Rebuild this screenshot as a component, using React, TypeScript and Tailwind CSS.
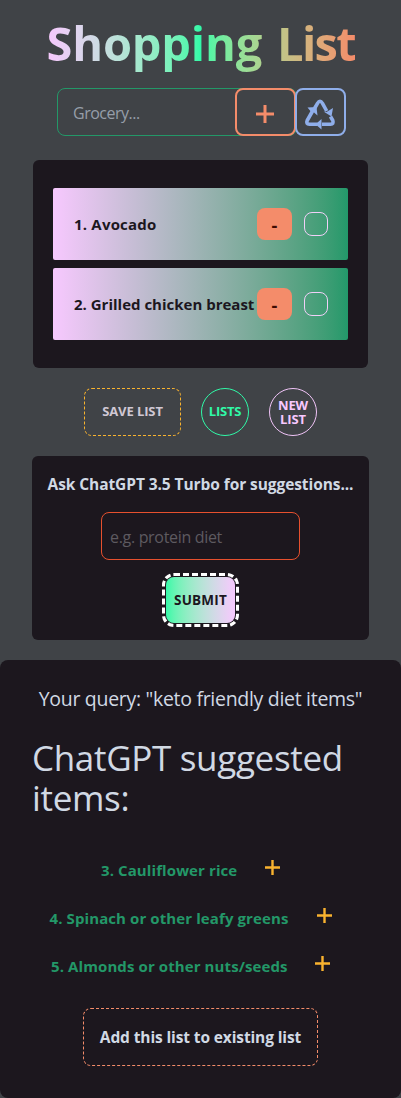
import React from "react";

const panel = "bg-[#1c171e]";

function ListRow({ label, spacing }: { label: string; spacing: string }) {
  return (
    <li className="flex h-[72px] w-[295px] items-center rounded-[2px] bg-linear-to-r from-[#f7c8fe] to-[#22996a] pr-5 pl-[21px]">
      <span className={"w-[183px] whitespace-nowrap text-[15px] font-bold text-[#1c171e] " + spacing}>{label}</span>
      <button className="h-8 w-[35px] rounded-lg bg-[#f48c6a] pt-px text-lg leading-8 font-bold text-[#3d0b02]">-</button>
      <span className="ml-3 size-6 rounded-lg border border-[#f0d0f8]" />
    </li>
  );
}

function Suggestion({ label, width }: { label: string; width: string }) {
  return (
    <li className="flex h-12 items-center justify-center">
      <span className={"whitespace-nowrap text-[15px] font-bold tracking-[0.1px] text-[#239868] " + width}>{label}</span>
      <svg viewBox="0 0 15 15" className="relative -top-[3px] ml-7 size-[15px]" stroke="#f9b32f" strokeWidth="2.4">
        <path d="M7.500 0v15M0 7.500h15" />
      </svg>
    </li>
  );
}

function RecycleIcon() {
  return (
    <svg viewBox="0 0 32 34" className="-ml-px h-[34px] w-8 shrink-0" fill="none" stroke="#8faeea" strokeWidth="3.6" strokeLinejoin="round">
      <path d="M10.500 12.500l3-5.200q2.500-4.200 5 0l4.200 7.700" />
      <path d="M26.500 20.500l2.300 4q1.200 3.500-2.300 3.700H18" />
      <path d="M13.500 28.200H5.500q-3.800-.2-2.300-3.700L8.300 15.500" />
      <path d="M3.500 11.500l9-.5 1 8.500-3.500-3-2 .5zM19.500 15.500l3 .5 6.500-4-1.500 8.500zM17.500 23v10.500l-6-5.300z" fill="#8faeea" stroke="none" />
    </svg>
  );
}

export default function App() {
  return (
    <main className="flex h-[1098px] w-[401px] flex-col items-center overflow-hidden bg-[#404347] font-['Open_Sans',sans-serif] text-[#d1d9e4]">
      <h1 className="mt-[13px] h-[62px] w-[308px] bg-linear-to-r from-[#f7c8fe] via-[#30f9a8] to-[#f48c6a] bg-clip-text text-[47px] leading-[60px] font-bold tracking-[-0.2px] whitespace-nowrap text-transparent [word-spacing:3px]">
        Shopping <span className="tracking-[-1.7px]">List</span>
      </h1>
      <div className="mt-[13px] ml-0.5 flex h-12 w-[289px]">
        <div className="-mr-[62px] flex h-12 w-[240px] shrink-0 items-center rounded-lg border border-[#239868] pt-0.5 pl-[15px] text-base tracking-[-0.5px] text-[#969ea9]">Grocery...</div>
        <button className="flex h-12 w-[61px] shrink-0 items-center justify-center rounded-lg border-2 border-[#f48c6a]">
          <svg viewBox="0 0 18 18" className="mt-1 -ml-px size-[18px]" stroke="#f48c6a" strokeWidth="3"><path d="M9 0v18M0 9h18" /></svg>
        </button>
        <button className="-ml-px flex h-12 w-[51px] shrink-0 items-center justify-center rounded-lg border-2 border-[#8faeea] pt-0.5"><RecycleIcon /></button>
      </div>
      <ul className={"mt-6 flex h-[208px] w-[335px] flex-col items-center gap-2 rounded-md pt-7 " + panel}>
        <ListRow label="1. Avocado" spacing="tracking-[0.2px]" />
        <ListRow label="2. Grilled chicken breast" spacing="tracking-normal" />
      </ul>
      <div className="mt-5 flex h-12 gap-5 text-[13px] font-bold">
        <button className="w-[97px] rounded-lg border border-dashed border-[#f9b32f] tracking-[-0.1px] text-[#d0c8d4]">SAVE LIST</button>
        <button className="w-12 rounded-full border border-[#30f9a8] tracking-[-0.2px] text-[#30f9a8]">LISTS</button>
        <button className="w-12 rounded-full border border-[#f0c4f7] leading-[14px] tracking-[-0.1px] text-[#f7c8fe]">NEW LIST</button>
      </div>
      <section className={"mt-5 flex h-[184px] w-[337px] flex-col items-center rounded-md pt-4 " + panel}>
        <h2 className="text-[15.5px] leading-6 font-bold tracking-[-0.08px] whitespace-nowrap">Ask ChatGPT 3.5 Turbo for suggestions...</h2>
        <div className="mt-4 flex h-12 w-[199px] items-center rounded-lg border border-[#e6502e] pt-0.5 pl-2 text-base tracking-[-0.32px] text-[#5e5a60]">e.g. protein diet</div>
        <button className="mt-[17px] h-[46px] w-[69px] rounded-lg bg-linear-to-r from-[#30f9a8] to-[#f7c8fe] text-[13.5px] font-bold tracking-[0.2px] text-[#1c171e] outline-3 outline-offset-1 outline-white outline-dashed">SUBMIT</button>
      </section>
      <section className={"mt-5 flex h-[438px] w-full flex-col items-center rounded-lg pt-6 " + panel}>
        <p className="text-[19.5px] leading-[30px] tracking-[-0.3px] whitespace-nowrap">Your query: "keto friendly diet items"</p>
        <h2 className="mt-6 w-[337px] text-[35px] leading-10 tracking-[-0.32px]">ChatGPT suggested items:</h2>
        <ul className="mt-7 w-full pr-5">
          <Suggestion label="3. Cauliflower rice" width="w-[136px]" />
          <Suggestion label="4. Spinach or other leafy greens" width="w-[239px]" />
          <Suggestion label="5. Almonds or other nuts/seeds" width="w-[236px]" />
        </ul>
        <button className="mt-[18px] h-[58px] w-[235px] rounded-lg border border-dashed border-[#f48c6a] pt-0.5 text-[15.5px] font-bold tracking-[-0.12px] whitespace-nowrap">Add this list to existing list</button>
      </section>
    </main>
  );
}
